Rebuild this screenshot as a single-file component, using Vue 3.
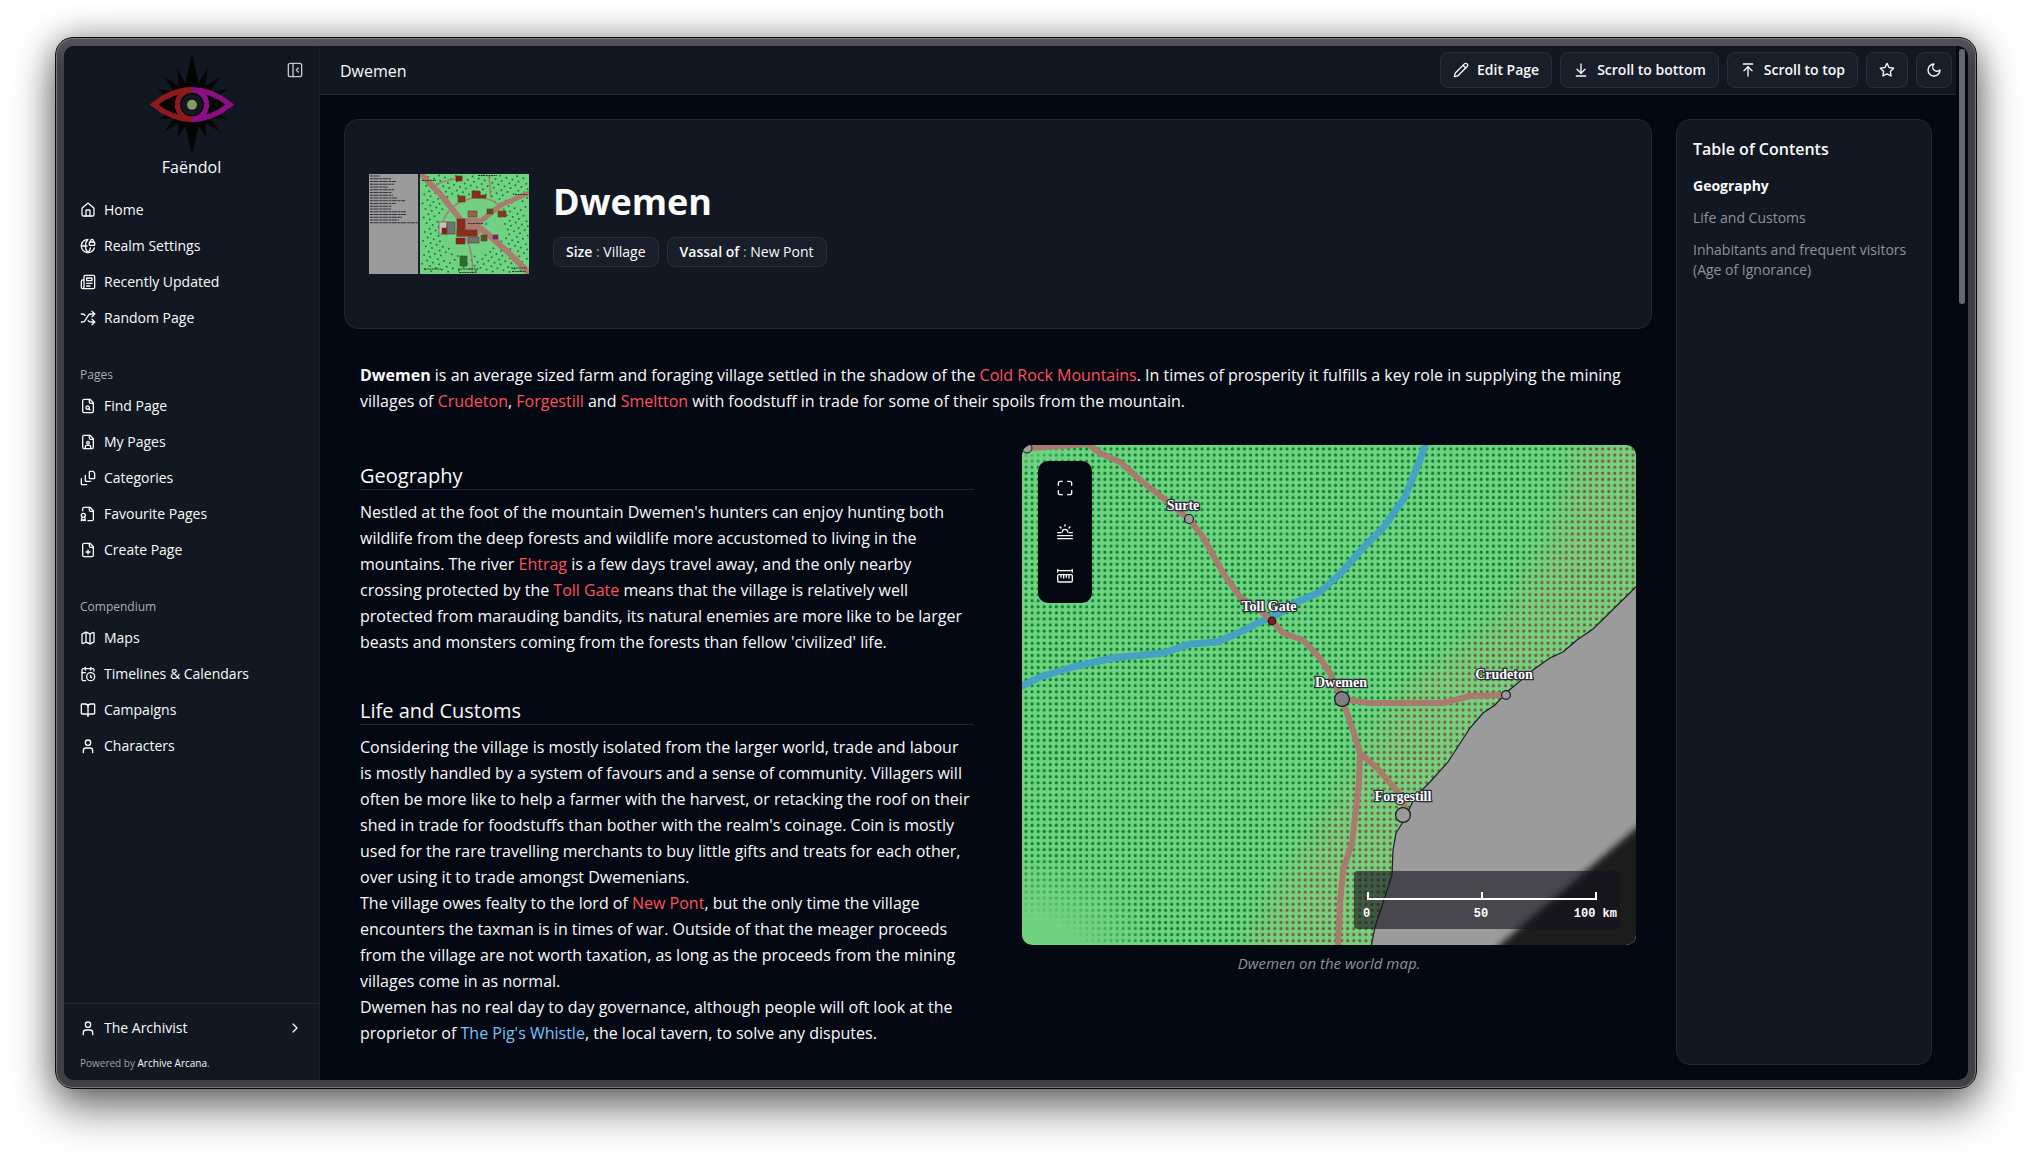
<script setup>
import { ref } from 'vue';

const file = 'M15 2H6a2 2 0 0 0-2 2v16a2 2 0 0 0 2 2h12a2 2 0 0 0 2-2V7Z';
const fold = 'M14 2v4a2 2 0 0 0 2 2h4';

// stroke icons on a 24 unit grid
const icons = {
    home: ['M15 21v-8a1 1 0 0 0-1-1h-4a1 1 0 0 0-1 1v8', 'M3 10a2 2 0 0 1 .709-1.528l7-5.999a2 2 0 0 1 2.582 0l7 5.999A2 2 0 0 1 21 10v9a2 2 0 0 1-2 2H5a2 2 0 0 1-2-2z'],
    realm: ['M15.686 15A14.5 14.5 0 0 1 12 22a14.5 14.5 0 0 1 0-20 10 10 0 1 0 9.542 13', 'M2 12h8.5', 'M20 6V4a2 2 0 1 0-4 0v2', 'M15 6h6a1 1 0 0 1 1 1v3a1 1 0 0 1-1 1h-6a1 1 0 0 1-1-1V7a1 1 0 0 1 1-1Z'],
    news: ['M4 22h16a2 2 0 0 0 2-2V4a2 2 0 0 0-2-2H8a2 2 0 0 0-2 2v16a2 2 0 0 1-2 2Zm0 0a2 2 0 0 1-2-2v-9c0-1.1.9-2 2-2h2', 'M18 14h-8', 'M15 18h-5', 'M10 6h8v4h-8V6Z'],
    shuffle: ['m18 14 4 4-4 4', 'm18 2 4 4-4 4', 'M2 18h1.973a4 4 0 0 0 3.3-1.7l5.454-8.6a4 4 0 0 1 3.3-1.7H22', 'M2 6h1.972a4 4 0 0 1 3.6 2.2', 'M22 18h-6.041a4 4 0 0 1-3.3-1.8l-.359-.45'],
    find: [file, fold, 'M9 14.5a2.5 2.5 0 1 0 5 0a2.5 2.5 0 1 0-5 0', 'M13.3 16.3 15 18'],
    mine: [file, fold, 'M10 13a2 2 0 1 0 4 0a2 2 0 1 0-4 0', 'M16 22v-3a2 2 0 0 0-2-2h-4a2 2 0 0 0-2 2v3'],
    stack: ['M20 2h-5a1 1 0 0 0-1 1v9a1 1 0 0 0 1 1h6a1 1 0 0 0 1-1V5Z', 'M8 8v8a1 1 0 0 0 1 1h7', 'M2 13v8a1 1 0 0 0 1 1h7'],
    badge: ['M12 22h6a2 2 0 0 0 2-2V7l-5-5H6a2 2 0 0 0-2 2v3', fold, 'M2 14a3 3 0 1 0 6 0a3 3 0 1 0-6 0', 'M7 16.5 8 22l-3-1-3 1 1-5.5'],
    create: [file, fold, 'M9 15h6', 'M12 18v-6'],
    map: ['M14.106 5.553a2 2 0 0 0 1.788 0l3.659-1.83A1 1 0 0 1 21 4.619v12.764a1 1 0 0 1-.553.894l-4.553 2.277a2 2 0 0 1-1.788 0l-4.212-2.106a2 2 0 0 0-1.788 0l-3.659 1.83A1 1 0 0 1 3 19.381V6.618a1 1 0 0 1 .553-.894l4.553-2.277a2 2 0 0 1 1.788 0z', 'M15 5.764v15', 'M9 3.236v15'],
    calendar: ['M21 7.5V6a2 2 0 0 0-2-2H5a2 2 0 0 0-2 2v14a2 2 0 0 0 2 2h3.5', 'M16 2v4', 'M8 2v4', 'M3 10h5', 'M17.5 17.5 16 16.3V14', 'M10 16a6 6 0 1 0 12 0a6 6 0 1 0-12 0'],
    book: ['M12 7v14', 'M3 18a1 1 0 0 1-1-1V4a1 1 0 0 1 1-1h5a4 4 0 0 1 4 4 4 4 0 0 1 4-4h5a1 1 0 0 1 1 1v13a1 1 0 0 1-1 1h-6a3 3 0 0 0-3 3 3 3 0 0 0-3-3z'],
    user: ['M19 22v-3a4 4 0 0 0-4-4H9a4 4 0 0 0-4 4v3', 'M8 7a4 4 0 1 0 8 0a4 4 0 1 0-8 0'],
    panel: ['M5 2h14a3 3 0 0 1 3 3v14a3 3 0 0 1-3 3H5a3 3 0 0 1-3-3V5a3 3 0 0 1 3-3Z', 'M9 2v20', 'm17 15-3-3 3-3'],
    pencil: ['M21.174 6.812a1 1 0 0 0-3.986-3.987L3.842 16.174a2 2 0 0 0-.5.83l-1.321 4.352a.5.5 0 0 0 .623.622l4.353-1.32a2 2 0 0 0 .83-.497z', 'm15 5 4 4'],
    bottom: ['M12 17V3', 'm6 11 6 6 6-6', 'M19 21H5'],
    top: ['M5 3h14', 'm18 13-6-6-6 6', 'M12 7v14'],
    star: ['M12 2l3.09 6.26L22 9.27l-5 4.87 1.18 6.88L12 17.77l-6.18 3.25L7 14.14 2 9.27l6.91-1.01L12 2Z'],
    moon: ['M12 3a6 6 0 0 0 9 9 9 9 0 1 1-9-9Z'],
    chevron: ['m9 18 6-6-6-6'],
    expand: ['M8 2H5a3 3 0 0 0-3 3v3', 'M22 8V5a3 3 0 0 0-3-3h-3', 'M2 16v3a3 3 0 0 0 3 3h3', 'M16 22h3a3 3 0 0 0 3-3v-3'],
    haze: ['M12 1v2', 'M4.5 4.5 6 6', 'M19.5 4.5 18 6', 'M1 13h5', 'M18 13h5', 'M8 12a4 4 0 0 1 8 0', 'M1 17.5h22', 'M1 22h22'],
    ruler: ['M1 4h22', 'M1 2v4', 'M23 2v4', 'M3 10h18a2 2 0 0 1 2 2v7a2 2 0 0 1-2 2H3a2 2 0 0 1-2-2v-7a2 2 0 0 1 2-2Z', 'M6 10v4', 'M10 10v5', 'M14 10v4', 'M18 10v5']
};

const groups = [
    {
        items: [
            { icon: 'home', name: 'Home' },
            { icon: 'realm', name: 'Realm Settings' },
            { icon: 'news', name: 'Recently Updated' },
            { icon: 'shuffle', name: 'Random Page' }
        ]
    },
    {
        label: 'Pages',
        items: [
            { icon: 'find', name: 'Find Page' },
            { icon: 'mine', name: 'My Pages' },
            { icon: 'stack', name: 'Categories' },
            { icon: 'badge', name: 'Favourite Pages' },
            { icon: 'create', name: 'Create Page' }
        ]
    },
    {
        label: 'Compendium',
        items: [
            { icon: 'map', name: 'Maps' },
            { icon: 'calendar', name: 'Timelines & Calendars' },
            { icon: 'book', name: 'Campaigns' },
            { icon: 'user', name: 'Characters' }
        ]
    }
];

const actions = [
    { icon: 'pencil', name: 'Edit Page' },
    { icon: 'bottom', name: 'Scroll to bottom' },
    { icon: 'top', name: 'Scroll to top' }
];

const tools = [
    { icon: 'expand', name: 'Fullscreen' },
    { icon: 'haze', name: 'Time of day' },
    { icon: 'ruler', name: 'Measure' }
];

const contents = ['Geography', 'Life and Customs', 'Inhabitants and frequent visitors (Age of Ignorance)'];
const current = ref(0);

const places = [
    { name: 'Surte', x: 161, y: 65, cx: 167, cy: 74, r: 4.5, fill: '#9b9b9b' },
    { name: 'Toll Gate', x: 247, y: 166, cx: 250, cy: 176, r: 3.8, fill: '#8c191c' },
    { name: 'Dwemen', x: 319, y: 242, cx: 320, cy: 254, r: 7.4, fill: '#7f7f84' },
    { name: 'Crudeton', x: 482, y: 234, cx: 484, cy: 250, r: 4.4, fill: '#9b9b9b' },
    { name: 'Forgestill', x: 381, y: 356, cx: 381, cy: 370, r: 7.4, fill: '#9b9b9b' }
];

// widths of the rows of the village legend
const legend = [10, 21, 26, 24, 18, 24, 22, 23, 27, 35, 26, 22, 21, 36, 36, 32, 29, 49];

// scattered trees around the village
const trees = [];
for (let i = 0; i < 330; i++) {
    const x = 53 + ((i * 61.803) % 106);
    const y = 1 + ((i * 37.713) % 98);
    const dx = x - 103;
    const dy = y - 51;
    if (dx * dx + dy * dy * 1.1 > 1050) {
        trees.push({ x, y });
    }
}

const houses = [
    { x: 87, y: 2, w: 6, h: 5, c: '#8e1c1c' },
    { x: 103, y: 17, w: 8, h: 7, c: '#8e2a1c' },
    { x: 109, y: 21, w: 8, h: 3, c: '#8e2a1c' },
    { x: 89, y: 22, w: 7, h: 6, c: '#7d3a22' },
    { x: 118, y: 35, w: 6, h: 5, c: '#6b4a28' },
    { x: 129, y: 37, w: 8, h: 6, c: '#84382a' },
    { x: 99, y: 37, w: 9, h: 6, c: '#a05f4c' },
    { x: 70, y: 48, w: 8, h: 12, c: '#c9c0c4' },
    { x: 73, y: 54, w: 5, h: 6, c: '#8e1c1c' },
    { x: 78, y: 48, w: 8, h: 12, c: '#6d7378' },
    { x: 88, y: 45, w: 8, h: 17, c: '#8e2a1c' },
    { x: 88, y: 56, w: 20, h: 6, c: '#8e2a1c' },
    { x: 87, y: 64, w: 9, h: 6, c: '#8e1c1c' },
    { x: 99, y: 63, w: 11, h: 6, c: '#6d7378' },
    { x: 112, y: 61, w: 6, h: 6, c: '#6b4a28' },
    { x: 124, y: 61, w: 5, h: 4, c: '#8b1080' },
    { x: 91, y: 82, w: 7, h: 10, c: '#24702c' }
];
</script>

<template>
    <div class="desktop">
        <div class="window">
            <div class="screen">
                <aside class="sidebar">
                    <button class="collapse" aria-label="Collapse sidebar">
                        <svg class="icon" viewBox="0 0 24 24"><path v-for="d in icons.panel" :key="d" :d="d" /></svg>
                    </button>
                    <div class="brand">
                        <svg class="logo" viewBox="0 0 300 302">
                            <defs>
                                <clipPath id="half-left"><rect x="0" y="0" width="150" height="302" /></clipPath>
                                <clipPath id="half-right"><rect x="150" y="0" width="150" height="302" /></clipPath>
                            </defs>
                            <path fill="#050506" d="M150 0 L170 88 L197 43 L190 98 L235 68 L206 112 L259 107 L222 130 V176 L259 197 L206 194 L235 235 L190 208 L194 252 L170 218 L150 302 L130 218 L106 252 L110 208 L66 235 L94 194 L51 197 L78 176 V130 L46 107 L94 112 L66 68 L110 98 L104 43 L130 88Z" />
                            <g v-for="side in [{ clip: 'half-left', c: '#8c1a1d' }, { clip: 'half-right', c: '#8b0f80' }]" :key="side.clip" :clip-path="`url(#${side.clip})`" fill="none" :stroke="side.c" stroke-width="16">
                                <path fill="#050506" d="M35 153 Q92 108 150 108 Q208 108 265 153 Q208 198 150 198 Q92 198 35 153Z" />
                                <circle cx="150" cy="153" r="44" fill="#050506" />
                            </g>
                            <circle cx="150" cy="153" r="32" fill="#111822" />
                            <circle cx="150" cy="153" r="15" fill="#879a62" />
                        </svg>
                        <span>Faëndol</span>
                    </div>
                    <nav class="menu">
                        <div v-for="(group, index) in groups" :key="index" class="group">
                            <p v-if="group.label" class="group-label">{{ group.label }}</p>
                            <ul>
                                <li v-for="item in group.items" :key="item.name">
                                    <a href="#">
                                        <svg class="icon" viewBox="0 0 24 24"><path v-for="d in icons[item.icon]" :key="d" :d="d" /></svg>
                                        {{ item.name }}
                                    </a>
                                </li>
                            </ul>
                        </div>
                    </nav>
                    <footer class="side-footer">
                        <button class="account">
                            <svg class="icon" viewBox="0 0 24 24"><path v-for="d in icons.user" :key="d" :d="d" /></svg>
                            <span>The Archivist</span>
                            <svg class="icon" viewBox="0 0 24 24"><path v-for="d in icons.chevron" :key="d" :d="d" /></svg>
                        </button>
                        <p class="powered">Powered by <a href="#">Archive Arcana</a>.</p>
                    </footer>
                </aside>

                <div class="page">
                    <header class="topbar">
                        <span class="crumb">Dwemen</span>
                        <button v-for="action in actions" :key="action.name" class="btn">
                            <svg class="icon" viewBox="0 0 24 24"><path v-for="d in icons[action.icon]" :key="d" :d="d" /></svg>
                            {{ action.name }}
                        </button>
                        <button class="btn" aria-label="Favourite">
                            <svg class="icon" viewBox="0 0 24 24"><path v-for="d in icons.star" :key="d" :d="d" /></svg>
                        </button>
                        <button class="btn square" aria-label="Theme">
                            <svg class="icon" viewBox="0 0 24 24"><path v-for="d in icons.moon" :key="d" :d="d" /></svg>
                        </button>
                    </header>

                    <div class="content">
                        <main class="article">
                            <section class="hero">
                                <svg class="thumb" viewBox="0 0 160 100">
                                    <rect width="160" height="100" fill="#72d183" />
                                    <circle v-for="(tree, index) in trees" :key="index" :cx="tree.x" :cy="tree.y" r="1" fill="#078a35" />
                                    <g fill="none" stroke="#aa7b6e">
                                        <path stroke-width="6" d="M50 -2 L72 21 L92 46 L113 55 L140 79 L163 102" />
                                        <path stroke-width="5" d="M108 50 L132 31 L162 18" />
                                        <path stroke-width="1.4" d="M74 48 Q80 29 104 24 Q126 23 132 35 M68 11 Q74 6 88 5 M97 64 Q105 80 103 100 M122 24 L120 2" />
                                    </g>
                                    <path fill="#aa7b6e" d="M88 44H113V57L108 63H88Z" />
                                    <rect v-for="(house, index) in houses" :key="index" :x="house.x" :y="house.y" :width="house.w" :height="house.h" :fill="house.c" stroke="#59401f" stroke-width=".6" />
                                    <circle cx="117" cy="50" r="1.6" fill="#3c8ec4" />
                                    <path stroke="#333" stroke-width="1" stroke-dasharray="2 .6" d="M99 49.500H114 M53 6.500H67 M109 1.500H128 M146 20.500H159 M55 95H72 M89 95H110 M90 98.500H108 M142 94H158 M143 97.500H157" />
                                    <rect width="49" height="100" fill="#9b9b9b" />
                                    <rect x="49" width="2" height="100" fill="#1d222c" />
                                    <path v-for="(w, index) in legend" :key="index" :d="`M1 ${2 + index * 2.75}h${w}`" stroke="#33333c" stroke-width="1.2" stroke-dasharray="3 .5 5 .7" />
                                </svg>
                                <div class="hero-text">
                                    <h1>Dwemen</h1>
                                    <div class="badges">
                                        <span class="badge"><b>Size</b> : <a href="#">Village</a></span>
                                        <span class="badge"><b>Vassal of</b> : <a href="#">New Pont</a></span>
                                    </div>
                                </div>
                            </section>

                            <p class="intro">
                                <strong>Dwemen</strong> is an average sized farm and foraging village settled in the shadow of the <a href="#">Cold Rock Mountains</a>. In times of prosperity it fulfills a key role in supplying the mining villages of <a href="#">Crudeton</a>, <a href="#">Forgestill</a> and <a href="#">Smeltton</a> with foodstuff in trade for some of their spoils from the mountain.
                            </p>

                            <div class="columns">
                                <div class="story">
                                    <section>
                                        <h2>Geography</h2>
                                        <p>Nestled at the foot of the mountain Dwemen's hunters can enjoy hunting both wildlife from the deep forests and wildlife more accustomed to living in the mountains. The river <a href="#">Ehtrag</a> is a few days travel away, and the only nearby crossing protected by the <a href="#">Toll Gate</a> means that the village is relatively well protected from marauding bandits, its natural enemies are more like to be larger beasts and monsters coming from the forests than fellow 'civilized' life.</p>
                                    </section>
                                    <section>
                                        <h2>Life and Customs</h2>
                                        <p>Considering the village is mostly isolated from the larger world, trade and labour is mostly handled by a system of favours and a sense of community. Villagers will often be more like to help a farmer with the harvest, or retacking the roof on their shed in trade for foodstuffs than bother with the realm's coinage. Coin is mostly used for the rare travelling merchants to buy little gifts and treats for each other, over using it to trade amongst Dwemenians.</p>
                                        <p>The village owes fealty to the lord of <a href="#">New Pont</a>, but the only time the village encounters the taxman is in times of war. Outside of that the meager proceeds from the village are not worth taxation, as long as the proceeds from the mining villages come in as normal.</p>
                                        <p>Dwemen has no real day to day governance, although people will oft look at the proprietor of <a href="#" class="known">The Pig's Whistle</a>, the local tavern, to solve any disputes.</p>
                                    </section>
                                </div>

                                <figure>
                                    <div class="map">
                                        <svg class="map-art" viewBox="0 0 614 500" preserveAspectRatio="xMidYMid slice">
                                            <defs>
                                                <pattern id="dots" width="6.07" height="6.07" patternUnits="userSpaceOnUse" x="1" y="1">
                                                    <circle cx="3" cy="3" r="1.6" fill="#fff" />
                                                </pattern>
                                                <radialGradient id="clearing">
                                                    <stop offset=".35" stop-color="#000" />
                                                    <stop offset="1" stop-color="#000" stop-opacity="0" />
                                                </radialGradient>
                                                <mask id="forest" maskUnits="userSpaceOnUse" x="0" y="0" width="614" height="500">
                                                    <rect width="614" height="500" fill="url(#dots)" />
                                                    <ellipse cx="10" cy="510" rx="130" ry="100" fill="url(#clearing)" />
                                                    <ellipse cx="0" cy="0" rx="60" ry="28" fill="url(#clearing)" opacity=".7" />
                                                </mask>
                                                <filter id="soft"><feGaussianBlur stdDeviation="12" /></filter>
                                                <filter id="edge"><feGaussianBlur stdDeviation="3" /></filter>
                                            </defs>
                                            <rect width="614" height="500" fill="#71d282" />
                                            <path filter="url(#soft)" fill="#8dc57f" opacity=".25" d="M570 -30 L535 90 L480 170 L410 215 L370 250 L340 300 L300 370 L250 440 L200 540 H660 V-30Z" />
                                            <g mask="url(#forest)">
                                                <rect width="614" height="500" fill="#07872f" />
                                                <path filter="url(#soft)" fill="#73633a" d="M568 -30 L530 90 L484 170 L420 215 L378 250 L348 300 L308 370 L258 440 L208 540 H660 V-30Z" />
                                            </g>
                                            <path fill="#9b9b9b" stroke="#1b1e26" stroke-width="1.2" d="M616 140 L571 184 L555 195 L541 207 L528 213 L511 225 L485 247 L473 260 L461 268 L448 283 L435 303 L426 317 L408 337 L393 352 L381 377 L374 388 L371 405 L370 430 L361 458 L353 482 L349 502 H616Z" />
                                            <path filter="url(#edge)" fill="#1e1e1e" d="M640 361 L475 502 V530 H640Z" />
                                            <g fill="none" stroke-linejoin="round">
                                                <path stroke="#44a3c3" stroke-width="7" d="M-4 243 L18 232 L51 222 L91 213 L141 208 L168 199 L195 197 L218 187 L238 177 L258 168 L275 157 L298 147 L318 129 L341 103 L361 83 L383 52 L398 15 L405 -5" />
                                                <g stroke="#a97b6e" stroke-width="6">
                                                    <path d="M5 3 L40 1 L66 -1 L78 8 L98 17 L118 35 L141 53 L158 67 L167 74 L181 92 L191 110 L201 128 L218 152 L238 165 L250 176 L261 188 L281 195 L298 213 L308 228 L320 254 L330 282 L338 308 L337 338 L333 372 L330 398 L321 425 L318 458 L316 502" />
                                                    <path d="M320 254 L348 258 L421 258 L448 251 L484 250" />
                                                    <path d="M338 308 L355 323 L376 347 L384 364" />
                                                </g>
                                            </g>
                                            <circle cx="5" cy="3" r="5" fill="#9b9b9b" stroke="#16181f" />
                                            <g v-for="place in places" :key="place.name">
                                                <circle :cx="place.cx" :cy="place.cy" :r="place.r" :fill="place.fill" stroke="#16181f" stroke-width="1.2" />
                                                <text class="place" :x="place.x" :y="place.y">{{ place.name }}</text>
                                            </g>
                                        </svg>
                                        <div class="map-tools">
                                            <button v-for="tool in tools" :key="tool.name" :aria-label="tool.name">
                                                <svg class="icon" viewBox="0 0 24 24"><path v-for="d in icons[tool.icon]" :key="d" :d="d" /></svg>
                                            </button>
                                        </div>
                                        <div class="scale">
                                            <div class="scale-bar"><i></i></div>
                                            <div class="scale-text"><span>0</span><span>50</span><span>100 km</span></div>
                                        </div>
                                    </div>
                                    <figcaption>Dwemen on the world map.</figcaption>
                                </figure>
                            </div>
                        </main>

                        <aside class="toc">
                            <h3>Table of Contents</h3>
                            <ul>
                                <li v-for="(entry, index) in contents" :key="entry">
                                    <a href="#" :class="{ active: current == index }" @click.prevent="current = index">{{ entry }}</a>
                                </li>
                            </ul>
                        </aside>
                    </div>
                </div>
                <div class="gutter"><div class="thumb-bar"></div></div>
            </div>
        </div>
    </div>
</template>

<style>
body {
    margin: 0;
    background: #fff;
}
</style>

<style scoped>
* {
    box-sizing: border-box;
}
h1, h2, h3, p, ul, figure {
    margin: 0;
    padding: 0;
}
ul {
    list-style: none;
}
a {
    color: inherit;
    text-decoration: none;
}
button {
    font: inherit;
    color: inherit;
    background: none;
    border: 0;
    padding: 0;
}
.desktop {
    height: 100vh;
    padding: 37px 55px 73px;
    font-family: "Open Sans", "Noto Sans", sans-serif;
    font-size: 14px;
    line-height: 20px;
    color: #fafafa;
    overflow: hidden;
}
.window {
    height: 100%;
    padding: 8px;
    border: 1px solid #0b0b0d;
    border-radius: 18px;
    background: linear-gradient(#55535a, #414046 30px);
    box-shadow: inset 0 0 0 1px #77767b, 0 20px 44px rgba(0, 0, 0, 0.5), 0 0 32px rgba(0, 0, 0, 0.35);
}
.screen {
    display: flex;
    height: 100%;
    border-radius: 10px;
    overflow: hidden;
    background: #040813;
}
.icon {
    width: 16px;
    height: 16px;
    flex: none;
    fill: none;
    stroke: currentColor;
    stroke-width: 2;
    stroke-linecap: round;
    stroke-linejoin: round;
}

/* sidebar */
.sidebar {
    position: relative;
    display: flex;
    flex-direction: column;
    flex: none;
    width: 256px;
    background: #111822;
    border-right: 1px solid #1b222d;
}
.collapse {
    position: absolute;
    top: 16px;
    right: 16px;
    display: flex;
    color: #c4c6ca;
}
.brand {
    display: flex;
    flex-direction: column;
    align-items: center;
    gap: 2px;
    padding-top: 8px;
    font-size: 16px;
    line-height: 22px;
}
.logo {
    width: 100px;
    height: 100px;
}
.menu {
    display: flex;
    flex-direction: column;
    flex: 1;
    gap: 26px;
    padding: 16px;
    font-weight: 500;
}
.group ul {
    display: flex;
    flex-direction: column;
    gap: 4px;
}
.group-label {
    font-size: 12px;
    line-height: 30px;
    color: #a9acb1;
}
.group a {
    display: flex;
    align-items: center;
    gap: 8px;
    height: 32px;
}
.side-footer {
    padding: 8px 16px;
    border-top: 1px solid #202833;
}
.account {
    display: flex;
    align-items: center;
    gap: 8px;
    width: 100%;
    height: 32px;
    font-weight: 500;
    text-align: left;
}
.account span {
    flex: 1;
}
.powered {
    padding-top: 10px;
    font-size: 10px;
    line-height: 18px;
    color: #a0a3a9;
}
.powered a {
    color: #fafafa;
    font-weight: 500;
}

/* page */
.page {
    display: flex;
    flex-direction: column;
    flex: 1;
    min-width: 0;
}
.topbar {
    display: flex;
    align-items: center;
    gap: 8px;
    flex: none;
    height: 49px;
    padding: 0 4px 0 20px;
    background: #111822;
    border-bottom: 1px solid #202833;
}
.crumb {
    flex: 1;
    padding-top: 2px;
    font-size: 16px;
    font-weight: 500;
}
.btn {
    display: flex;
    align-items: center;
    justify-content: center;
    gap: 8px;
    height: 36px;
    padding: 0 12px;
    border: 1px solid #29303b;
    border-radius: 8px;
    background: #191f2a;
    font-weight: 600;
}
.btn.square {
    width: 36px;
    padding: 0;
}
.content {
    display: flex;
    gap: 24px;
    flex: 1;
    min-height: 0;
    padding: 24px 24px 15px;
}
.article {
    flex: 1;
    min-width: 0;
}
.hero {
    display: flex;
    align-items: center;
    gap: 24px;
    height: 210px;
    padding: 24px;
    border: 1px solid #202833;
    border-radius: 14px;
    background: #111822;
}
.thumb {
    width: 160px;
    height: 100px;
}
.hero-text {
    display: flex;
    flex-direction: column;
    gap: 14px;
}
h1 {
    font-size: 36px;
    line-height: 42px;
    font-weight: 700;
}
.badges {
    display: flex;
    gap: 8px;
}
.badge {
    padding: 4px 12px;
    border: 1px solid #29303b;
    border-radius: 8px;
    background: #191f2a;
    color: #9da0a6;
}
.badge b {
    font-weight: 600;
    color: #fafafa;
}
.badge a {
    font-weight: 500;
    color: #fafafa;
}
.intro {
    padding: 33px 16px 0;
    font-size: 16px;
    line-height: 26px;
}
.intro a, .story a {
    color: #ff5057;
}
.story a.known {
    color: #79c3f7;
}
.columns {
    display: grid;
    grid-template-columns: 1fr 1fr;
    gap: 48px;
    padding: 31px 16px 0;
}
.story {
    display: flex;
    flex-direction: column;
    gap: 43px;
    padding-top: 18px;
    font-size: 16px;
    line-height: 26px;
}
h2 {
    margin-bottom: 9px;
    border-bottom: 1px solid #202833;
    font-size: 20px;
    line-height: 26px;
    font-weight: 500;
}
.map {
    position: relative;
    height: 500px;
    border-radius: 10px;
    overflow: hidden;
}
.map-art {
    display: block;
    width: 100%;
    height: 100%;
}
.place {
    font: bold 14px "Liberation Serif", serif;
    text-anchor: middle;
    fill: #fff;
    stroke: #2a2c38;
    stroke-width: 2.5px;
    paint-order: stroke;
}
.map-tools {
    position: absolute;
    top: 16px;
    left: 16px;
    padding: 5px;
    border-radius: 10px;
    background: #040813;
}
.map-tools button {
    display: flex;
    align-items: center;
    justify-content: center;
    width: 44px;
    height: 44px;
}
.scale {
    position: absolute;
    right: 16px;
    bottom: 16px;
    width: 266px;
    height: 58px;
    padding: 21px 3px 0 13px;
    border-radius: 4px;
    background: rgba(22, 20, 30, 0.62);
    font: bold 12px/16px "Liberation Mono", monospace;
    color: #fff;
}
.scale-bar {
    display: flex;
    justify-content: center;
    height: 8px;
    margin-right: 20px;
    border: 2px solid #fff;
    border-top: 0;
}
.scale-bar i {
    width: 2px;
    background: #fff;
}
.scale-text {
    display: flex;
    justify-content: space-between;
    margin: 6px 0 0 -4px;
}
.scale-text span:nth-child(2) {
    padding-left: 18px;
}
figcaption {
    padding-top: 8px;
    text-align: center;
    font-size: 15px;
    font-style: italic;
    color: #8f9298;
}

/* table of contents */
.toc {
    flex: none;
    width: 256px;
    padding: 18px 16px 16px;
    border: 1px solid #202833;
    border-radius: 14px;
    background: #111822;
    color: #8f9298;
}
.toc h3 {
    margin-bottom: 16px;
    font-size: 16px;
    line-height: 22px;
    font-weight: 600;
    color: #fafafa;
}
.toc ul {
    display: flex;
    flex-direction: column;
    gap: 12px;
}
.toc a {
    display: block;
}
.toc a.active {
    font-weight: 700;
    color: #fafafa;
}
.gutter {
    flex: none;
    width: 12px;
    padding: 3px;
}
.thumb-bar {
    height: 255px;
    border-radius: 3px;
    background: #65686f;
}
</style>
